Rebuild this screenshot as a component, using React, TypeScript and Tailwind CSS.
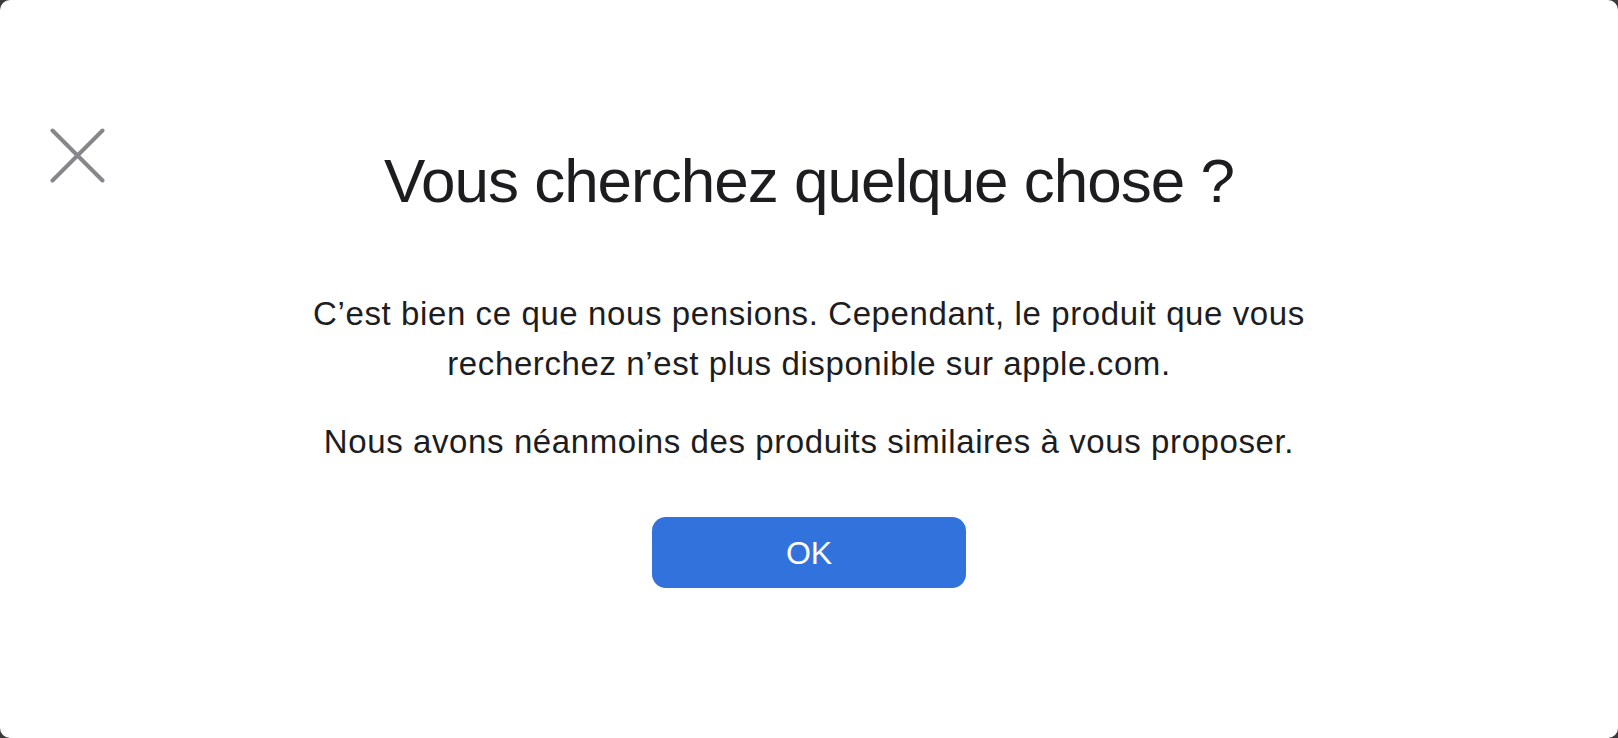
export default function App() {
  return (
    <div className="h-[738px] w-[1618px] bg-[#3a3a3c]" style={{ fontFamily: '"Liberation Sans", Arial, sans-serif' }}>
      <div className="relative flex h-full w-full flex-col items-center rounded-[10px] bg-white text-[#1d1d1f]">
        <button aria-label="Fermer" className="absolute left-[50px] top-[128px] h-[55px] w-[55px]">
          <svg width="55" height="55" viewBox="0 0 55 55" fill="none">
            <path d="M2.5 2.5L52.5 52.5M52.5 2.5L2.5 52.5" stroke="#86868b" strokeWidth="4" strokeLinecap="round" />
          </svg>
        </button>

        <h1 className="mt-[150px] text-[62px] leading-[62px] tracking-[-1px] font-normal">
          Vous cherchez quelque chose ?
        </h1>

        <p className="mt-[77px] text-center text-[33px] leading-[50px] tracking-[0.6px]">
          C’est bien ce que nous pensions. Cependant, le produit que vous
          <br />
          recherchez n’est plus disponible sur apple.com.
        </p>
        <p className="mt-[28px] text-center text-[33px] leading-[50px] tracking-[0.6px]">
          Nous avons néanmoins des produits similaires à vous proposer.
        </p>

        <button className="mt-[50px] flex h-[71px] w-[314px] items-center justify-center rounded-[14px] bg-[#3172dd] text-[32px] text-white">
          OK
        </button>
      </div>
    </div>
  );
}
